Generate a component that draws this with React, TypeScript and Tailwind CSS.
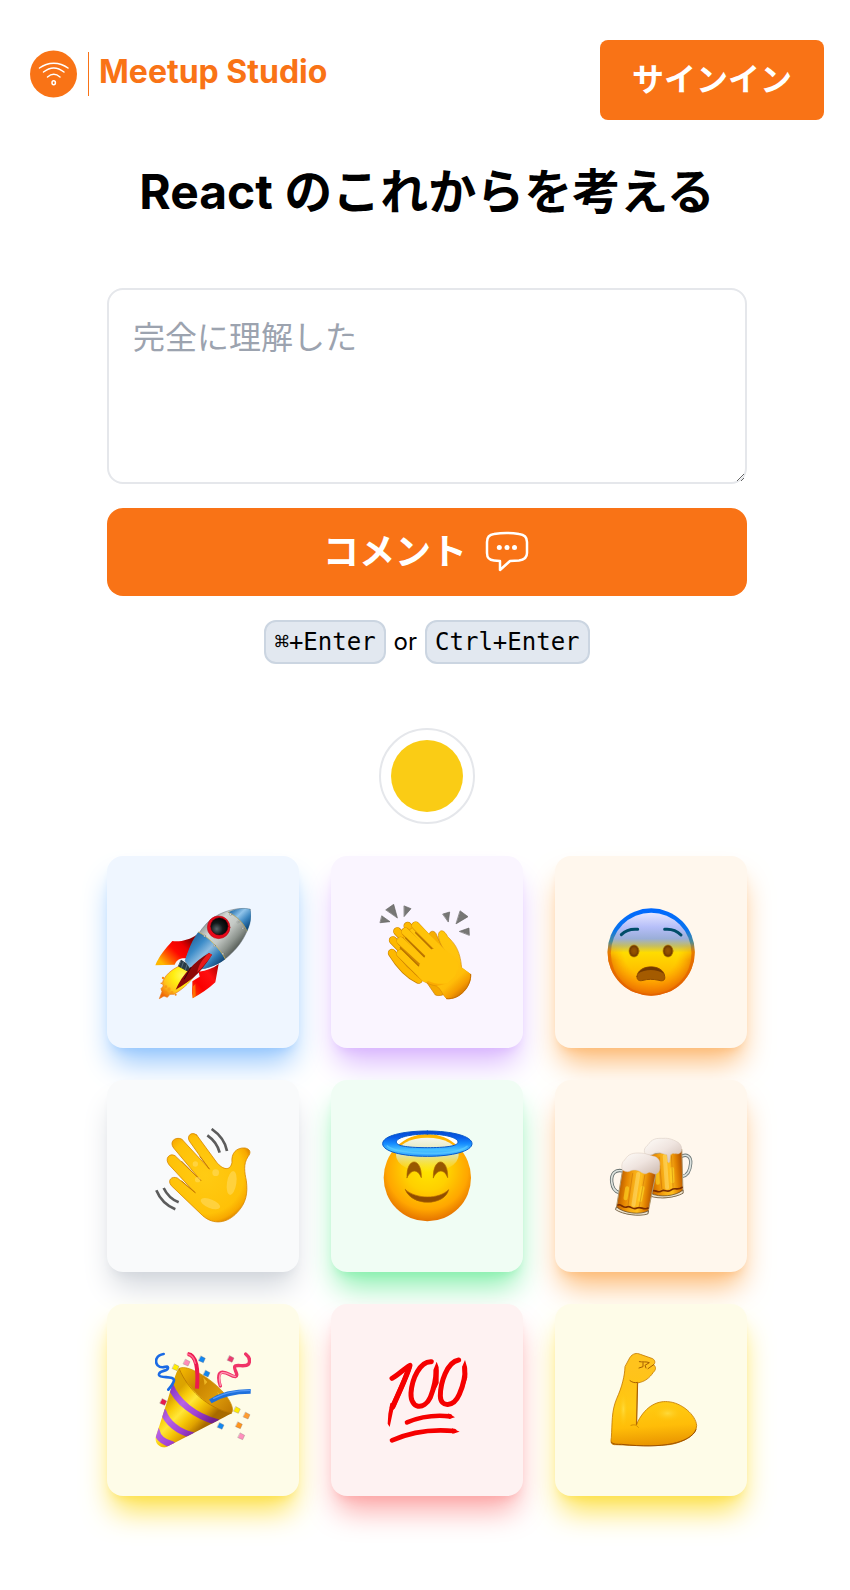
import type { ReactNode } from "react";

function Stops({ colors }: { colors: string[] }) {
  return (
    <>
      {colors.map((c, i) => (
        <stop key={i} offset={i / (colors.length - 1)} stopColor={c} />
      ))}
    </>
  );
}

function Emoji({ box, children }: { box: string; children: ReactNode }) {
  return (
    <svg viewBox={box} className="size-24" aria-hidden="true" strokeLinecap="round" strokeLinejoin="round">
      {children}
    </svg>
  );
}

function Rocket() {
  return (
    <Emoji box="195 192 288 288">
      <defs>
        <linearGradient id="rk-steel" gradientUnits="userSpaceOnUse" x1="345" y1="245" x2="445" y2="335">
          <Stops colors={["#8d9490", "#d3d7d4", "#c4c9c5", "#8b928c", "#3e4540"]} />
        </linearGradient>
        <linearGradient id="rk-blue" gradientUnits="userSpaceOnUse" x1="300" y1="300" x2="385" y2="385">
          <Stops colors={["#2669a0", "#3b8bc8", "#8dbce0", "#2f7bb5", "#0c3a66"]} />
        </linearGradient>
        <linearGradient id="rk-nose" gradientUnits="userSpaceOnUse" x1="435" y1="205" x2="482" y2="255">
          <Stops colors={["#2f78b4", "#90c4ea", "#3b86c0", "#0d4a80"]} />
        </linearGradient>
        <linearGradient id="rk-fin" gradientUnits="userSpaceOnUse" x1="300" y1="300" x2="225" y2="378">
          <Stops colors={["#8e0000", "#ee0000", "#ff0800", "#ff5a00", "#ffb800"]} />
        </linearGradient>
        <linearGradient id="rk-fin2" x1="1" y1="0" x2="0" y2="1">
          <Stops colors={["#a00000", "#ff1010", "#fa0000", "#ff4a00"]} />
        </linearGradient>
        <radialGradient id="rk-flame" cx="0.65" cy="0.3" r="0.8">
          <Stops colors={["#fffa60", "#ffee10", "#ffc21a", "#f06a0a"]} />
        </radialGradient>
        <radialGradient id="rk-glass" cx="0.35" cy="0.65" r="0.7">
          <Stops colors={["#59666a", "#12181a", "#000000"]} />
        </radialGradient>
      </defs>
      <path d="M320 284C300 299 272 306 247 303C226 326 206 350 196 376L254 374C262 355 278 353 293 356Z" fill="url(#rk-fin)" />
      <path d="M270 377C244 389 222 407 217 430L220 438L213 446L216 455L208 476L222 468L232 472L240 463L252 463C282 445 305 422 315 403L292 384Z" fill="url(#rk-flame)" stroke="#ea7410" strokeWidth="2" />
      <g fill="#f58a12">
        <circle cx="219" cy="414" r="3.5" /><circle cx="214" cy="430" r="2.5" /><circle cx="257" cy="464" r="3" />
        <circle cx="227" cy="457" r="5" opacity=".7" /><circle cx="237" cy="447" r="5" opacity=".5" /><circle cx="228" cy="440" r="4" opacity=".6" /><circle cx="246" cy="457" r="4" opacity=".5" />
      </g>
      <path d="M386 372L376 427C355 447 330 463 308 475C304 455 308 438 307 424L329 410L326 395C350 392 369 385 386 372Z" fill="url(#rk-fin2)" />
      <path d="M308 440L316 432L317 469L308 475Z" fill="#ff9a00" opacity=".6" />
      <path d="M274 361L302 379L296 395L266 379Z" fill="#283b46" stroke="#15222a" strokeWidth="2" />
      <path d="M280 367L275 382M291 374L286 390" stroke="#6d8796" strokeWidth="2" />
      <path d="M480 208C443 200 397 213 363 238C325 270 298 325 285 362L304 390C343 389 380 377 410 353C453 318 487 265 480 208Z" fill="url(#rk-steel)" stroke="#687078" strokeWidth="1.5" />
      <path d="M325 276C355 290 390 326 406 357C376 381 338 391 304 390L285 362C296 328 306 300 325 276Z" fill="url(#rk-blue)" />
      <path d="M415 217C438 204 465 203 480 208C486 226 482 252 471 273C459 246 440 229 415 217Z" fill="url(#rk-nose)" stroke="#316b91" strokeWidth="1" />
      <path d="M325 276C355 290 390 326 406 357" fill="none" stroke="#e8bd40" strokeWidth="2" />
      <path d="M415 217C440 229 459 246 471 273" fill="none" stroke="#cfae50" strokeWidth="2" />
      <path d="M357 339L366 344C350 370 336 386 325 399C306 418 281 436 257 449C276 405 315 363 357 339Z" fill="#8e0808" />
      <path d="M357 339L366 344C350 367 335 384 322 397C324 378 338 355 357 339Z" fill="#e91a1a" />
      <path d="M303 382L283 417" stroke="#34070b" strokeWidth="3" />
      <circle cx="386" cy="262" r="34" fill="#e8081a" stroke="#b00914" strokeWidth="1.5" />
      <circle cx="388" cy="259" r="26" fill="url(#rk-glass)" stroke="#430006" strokeWidth="1.5" />
      <g fill="#dcdedb" stroke="#59615c" strokeWidth="1">
        <circle cx="422" cy="223" r="3.5" /><circle cx="444" cy="246" r="3" /><circle cx="459" cy="265" r="3" />
        <circle cx="344" cy="288" r="3" /><circle cx="373" cy="317" r="3" /><circle cx="399" cy="341" r="3" />
      </g>
    </Emoji>
  );
}

function Clap() {
  return (
    <Emoji box="192 192 288 288">
      <defs>
        <linearGradient id="cl-skin" gradientUnits="userSpaceOnUse" x1="400" y1="270" x2="330" y2="440">
          <Stops colors={["#ffc70a", "#ffc40c", "#ffba08", "#f8a500"]} />
        </linearGradient>
        <linearGradient id="cl-wrist" gradientUnits="userSpaceOnUse" x1="390" y1="410" x2="442" y2="470">
          <Stops colors={["#ffc20a", "#ffbd08", "#f59b00", "#c96a00"]} />
        </linearGradient>
      </defs>
      <g fill="#777775" stroke="#646462" strokeWidth="2">
        <path d="M213 209L236 193L247 233Z" /><path d="M268 198L288 206L268 229Z" /><path d="M201 228L225 245L196 248Z" />
        <path d="M384 222L404 216L400 245Z" /><path d="M436 213L459 230L424 251Z" /><path d="M434 274L462 264L463 285Z" />
      </g>
      <path d="M337 430L361 465C371 469 383 466 389 461L376 430Z" fill="#f5a800" stroke="#c77800" strokeWidth="2" />
      <g fill="none">
        <g stroke="#c98200" strokeWidth="25">
          <path d="M278 258L320 300M247 274L295 325M234 301L292 360M231 339C250 370 275 402 311 419" />
        </g>
        <g stroke="#fdb800" strokeWidth="21">
          <path d="M278 258L320 300M247 274L295 325M234 301L292 360M231 339C250 370 275 402 311 419" />
        </g>
      </g>
      <path d="M342 286C343 268 362 271 365 286L386 331L355 324Z" fill="#f6ae00" stroke="#c77b00" strokeWidth="2" />
      <path d="M301 257L369 329L389 332C374 310 365 287 373 276C382 266 392 278 398 290C417 309 435 327 440 384L467 403C470 438 435 480 395 476C381 464 380 447 364 438C338 434 318 420 302 405L250 348L270 281Z" fill="url(#cl-skin)" stroke="#d98d00" strokeWidth="2" />
      <g fill="none" stroke="#d08400" strokeWidth="25">
        <path d="M256 341L312 397" /><path d="M257 303L324 371" /><path d="M271 275L335 344" /><path d="M302 257L360 319" />
      </g>
      <g fill="none" stroke="#ffc309" strokeWidth="22">
        <path d="M256 341L331 415" /><path d="M257 303L350 389" /><path d="M271 275L362 362" /><path d="M302 257L390 345" />
      </g>
      <path d="M348 326L385 329C417 343 438 367 430 401L398 430C360 437 330 420 310 404L311 377L329 350Z" fill="#ffc309" />
      <path d="M425 390L440 382L467 403C470 438 435 480 395 476C385 465 379 446 366 438C395 435 425 415 425 390Z" fill="url(#cl-wrist)" />
      <path d="M350 326L302 278M328 350L272 294M311 377L256 323" fill="none" stroke="#b77300" strokeWidth="4" />
      <path d="M467 403C469 438 435 480 395 476" fill="none" stroke="#c76c00" strokeWidth="3" />
    </Emoji>
  );
}

function FearfulFace() {
  return (
    <Emoji box="189 192 288 288">
      <defs>
        <linearGradient id="fe-face" x1="0" y1="0" x2="0" y2="1">
          <stop offset="0" stopColor="#e5e6ff" /><stop offset=".18" stopColor="#b5bef8" /><stop offset=".32" stopColor="#9aaed8" />
          <stop offset=".41" stopColor="#c5be62" /><stop offset=".49" stopColor="#ffdc00" /><stop offset=".75" stopColor="#ffbb00" /><stop offset="1" stopColor="#ff9600" />
        </linearGradient>
        <linearGradient id="fe-rim" x1="0" y1="0" x2="0" y2="1">
          <stop offset="0" stopColor="#0068ff" /><stop offset=".25" stopColor="#0874ed" /><stop offset=".38" stopColor="#4a8a98" /><stop offset=".5" stopColor="#e78800" /><stop offset="1" stopColor="#e96700" />
        </linearGradient>
        <radialGradient id="fe-edge" gradientUnits="userSpaceOnUse" cx="333.5" cy="330" r="138">
          <stop offset=".6" stopColor="#ff8800" stopOpacity="0" /><stop offset="1" stopColor="#e06000" stopOpacity=".85" />
        </radialGradient>
        <linearGradient id="fe-fade" gradientUnits="userSpaceOnUse" x1="0" y1="310" x2="0" y2="360">
          <stop offset="0" stopColor="#000" /><stop offset="1" stopColor="#fff" />
        </linearGradient>
        <mask id="fe-lower"><path d="M189 192H477V480H189Z" fill="url(#fe-fade)" /></mask>
        <radialGradient id="fe-eye"><Stops colors={["#985700", "#8c4c00", "#613200"]} /></radialGradient>
      </defs>
      <circle cx="333.5" cy="336" r="131" fill="url(#fe-rim)" />
      <ellipse cx="333.5" cy="340" rx="121" ry="122" fill="url(#fe-face)" />
      <circle cx="333.5" cy="336" r="131" fill="url(#fe-edge)" mask="url(#fe-lower)" />
      <g fill="none" stroke="#004d68" strokeWidth="9"><path d="M244 284C256 272 273 266 293 268" /><path d="M374 268C394 266 411 273 423 285" /></g>
      <g fill="url(#fe-eye)" stroke="#b57700" strokeWidth="2"><ellipse cx="282" cy="333" rx="15" ry="18" /><ellipse cx="384" cy="333" rx="15" ry="18" /></g>
      <path d="M291 409C294 371 371 371 374 409C377 423 365 424 357 421C340 417 323 417 309 421C298 424 290 421 291 409Z" fill="#a45b00" stroke="#8f4b00" strokeWidth="3" />
      <path d="M294 401C308 374 358 374 371 401C351 386 314 386 294 401Z" fill="#723900" />
    </Emoji>
  );
}

function Wave() {
  return (
    <Emoji box="195 189 288 288">
      <defs>
        <radialGradient id="wa-skin" gradientUnits="userSpaceOnUse" cx="345" cy="330" r="155">
          <stop offset="0" stopColor="#ffcb13" /><stop offset=".75" stopColor="#ffc107" /><stop offset=".9" stopColor="#f8a900" /><stop offset="1" stopColor="#d97c00" />
        </radialGradient>
      </defs>
      <g fill="none" stroke="#5c5c5c" strokeWidth="8" strokeLinecap="butt">
        <path d="M365 192C388 208 406 230 411 258M352 211C371 224 384 243 389 263M199 376C210 403 229 422 256 433M221 369C231 390 246 404 266 412" />
      </g>
      <path d="M320 210L380 292C399 315 421 319 426 292C423 265 439 247 465 249C481 252 484 263 474 275C459 297 464 323 469 347C474 385 468 415 442 442C412 475 371 481 338 452L244 362C231 346 245 332 262 339L314 382L237 299C223 281 238 263 255 272L331 345L251 249C237 231 254 214 275 222L357 311L300 231C287 214 304 197 320 210Z" fill="url(#wa-skin)" stroke="#d98900" strokeWidth="2.500" />
      <path d="M316 383L275 348M333 347L275 289M358 312L330 275" fill="none" stroke="#c57b00" strokeWidth="3" />
      <g fill="#ffdf70" opacity=".5">
        <ellipse cx="425" cy="354" rx="14" ry="36" transform="rotate(9 425 354)" /><ellipse cx="361" cy="416" rx="31" ry="13" transform="rotate(22 361 416)" />
        <circle cx="316" cy="297" r="8" /><circle cx="323" cy="344" r="8" /><circle cx="377" cy="323" r="10" />
      </g>
    </Emoji>
  );
}

function Halo() {
  return (
    <Emoji box="192 189 288 288">
      <defs>
        <radialGradient id="ha-face" cx=".5" cy=".4" r=".62">
          <stop offset="0" stopColor="#ffe600" /><stop offset=".4" stopColor="#ffd000" /><stop offset=".75" stopColor="#ffa600" /><stop offset="1" stopColor="#e06a00" />
        </radialGradient>
        <linearGradient id="ha-top" x1="0" y1="0" x2="0" y2="1"><stop offset="0" stopColor="#f4f7ee" /><stop offset=".5" stopColor="#dfe3a8" /><stop offset="1" stopColor="#ffe94a" stopOpacity="0" /></linearGradient>
        <linearGradient id="ha-ring" x1="0" y1="0" x2="0" y2="1"><Stops colors={["#0747d0", "#085ce8", "#168cff", "#49c3ff", "#2e9fff"]} /></linearGradient>
      </defs>
      <ellipse cx="337" cy="231" rx="94" ry="24" fill="#ffffff" />
      <circle cx="337" cy="338" r="131" fill="url(#ha-face)" />
      <ellipse cx="337" cy="270" rx="94" ry="52" fill="url(#ha-top)" />
      <path fillRule="evenodd" d="M337 198C413 198 471 214 471 236S413 274 337 274S203 259 203 236S261 198 337 198ZM337 207C285 207 244 218 244 231S285 248 337 248S429 244 429 231S389 207 337 207Z" fill="url(#ha-ring)" stroke="#0758c9" strokeWidth="3" />
      <path d="M217 243C247 270 415 275 456 244" fill="none" stroke="#62cfff" strokeWidth="5" opacity=".6" />
      <g fill="#985700" stroke="#ad6a00" strokeWidth="2"><path d="M276 338C273 275 321 275 319 338C307 310 288 313 276 338Z" /><path d="M355 338C353 275 400 275 398 338C387 310 367 313 355 338Z" /></g>
      <path d="M271 374C303 403 371 404 401 374C389 423 291 426 271 374Z" fill="#914d00" stroke="#ae6200" strokeWidth="2" />
    </Emoji>
  );
}

function Mug() {
  return (
    <>
      <path d="M0 5L101 0L91 129C67 142 18 142 -5 128Z" fill="url(#be-beer)" stroke="#b09a70" strokeWidth="3" />
      <path d="M-4 122C19 137 68 138 92 121L91 131C66 142 17 142 -6 130Z" fill="#f0e5ce" stroke="#57452c" strokeWidth="2" />
      <path d="M-1 115C8 109 16 125 28 117C37 112 45 126 57 117C68 110 77 122 90 113" fill="none" stroke="#7a2d00" strokeWidth="5" />
      <path d="M48 15L45 109" stroke="#fff2a0" strokeWidth="12" opacity=".35" />
      <path d="M20 62L19 92M66 55L63 92" stroke="#ffe02a" strokeWidth="12" opacity=".55" />
      <path d="M31 16L29 111M68 16L63 110" stroke="#a94b00" strokeWidth="2" opacity=".45" />
    </>
  );
}

function Beers() {
  return (
    <Emoji box="189 189 288 288">
      <defs>
        <linearGradient id="be-beer" x1="0" y1="0" x2="1" y2="0"><Stops colors={["#b85a00", "#e68600", "#f7ac16", "#ffbe1d", "#e18200", "#ab4a00"]} /></linearGradient>
        <linearGradient id="be-foam" x1="0" y1="0" x2="1" y2="1"><Stops colors={["#fffdf9", "#efe4df", "#cdbab0"]} /></linearGradient>
      </defs>
      <path d="M420 276C440 264 454 274 452 296C450 320 441 332 427 334" fill="none" stroke="#697575" strokeWidth="10" />
      <path d="M420 276C440 264 454 274 452 296C450 320 441 332 427 334" fill="none" stroke="#dce2df" strokeWidth="5" />
      <g transform="translate(325 264) rotate(-6)"><Mug /></g>
      <path d="M313 260C311 246 325 241 328 234C340 218 359 220 369 220C389 218 403 226 414 232C427 241 427 257 421 263C413 269 408 265 403 266C396 263 397 268 391 269L389 290C387 295 382 292 383 286L381 269C365 266 359 260 346 262C337 273 328 269 319 269Z" fill="url(#be-foam)" stroke="#d5c6bc" strokeWidth="1.500" />
      <path d="M249 318C225 312 213 326 215 350C217 370 225 380 238 383" fill="none" stroke="#606b6a" strokeWidth="10" />
      <path d="M249 318C225 312 213 326 215 350C217 370 225 380 238 383" fill="none" stroke="#dfe4df" strokeWidth="5" />
      <g transform="translate(249 306) rotate(7)"><Mug /></g>
      <path d="M247 315C242 300 248 288 255 284C265 265 282 264 297 264C319 264 325 270 338 273C356 276 362 289 359 304C361 320 351 328 344 327C334 324 331 320 324 323C313 330 306 323 299 319C287 313 276 315 269 319C260 322 254 318 247 315Z" fill="url(#be-foam)" stroke="#d8c8bd" strokeWidth="1.500" />
    </Emoji>
  );
}

function Party() {
  const bits: [number, number, string][] = [
    [336, 208, "#1287f0"], [350, 251, "#1287f0"], [392, 408, "#1287f0"], [422, 207, "#ec3b70"], [220, 336, "#e61c50"],
    [290, 218, "#ff8cb9"], [257, 232, "#ffed00"], [441, 360, "#ffed00"], [470, 377, "#ff9c2f"], [447, 406, "#ff941c"], [454, 439, "#ff8fbd"],
  ];
  return (
    <Emoji box="195 186 288 288">
      <defs>
        <linearGradient id="pa-cone" gradientUnits="userSpaceOnUse" x1="232" y1="335" x2="325" y2="425"><Stops colors={["#dca400", "#f9cc0a", "#ffe638", "#f7c808", "#e0a200", "#a86a00"]} /></linearGradient>
        <linearGradient id="pa-purple" gradientUnits="userSpaceOnUse" x1="235" y1="310" x2="350" y2="410"><Stops colors={["#8a38c5", "#b763e4", "#a040d4", "#71208f"]} /></linearGradient>
        <linearGradient id="pa-mouth" gradientUnits="userSpaceOnUse" x1="280" y1="240" x2="425" y2="365"><Stops colors={["#efb400", "#c98300", "#dd9c0a", "#c07800"]} /></linearGradient>
        <clipPath id="pa-shape"><path d="M266 236C257 244 244 300 196 445C196 462 211 475 228 472L404 381C414 376 420 373 426 369C360 360 300 300 266 236Z" /></clipPath>
      </defs>
      <path d="M268 235C285 224 336 248 380 287C415 318 434 353 426 367C418 376 380 374 340 345C290 309 258 252 268 235Z" fill="url(#pa-mouth)" stroke="#c98c00" strokeWidth="2" />
      <path d="M340 262L352 276L344 285ZM382 305L397 320L388 325Z" fill="#f5c02a" opacity=".8" />
      <g clipPath="url(#pa-shape)">
        <path d="M195 186H483V474H195Z" fill="url(#pa-cone)" />
        <g fill="none" stroke="url(#pa-purple)" strokeWidth="19"><path d="M242 288C260 335 315 378 380 396" /><path d="M220 365C231 397 264 425 306 435" /><path d="M199 420C202 439 218 456 246 463" /></g>
      </g>
      <path d="M268 237C292 296 350 355 425 369" fill="none" stroke="#b87600" strokeWidth="2.500" />
      <path d="M293 192C321 195 325 239 321 296" fill="none" stroke="#ec194f" strokeWidth="12" strokeLinecap="butt" />
      <path d="M292 192C305 194 313 205 316 220" fill="none" stroke="#ff6b91" strokeWidth="4" />
      <path d="M361 334C393 313 435 304 482 304" fill="none" stroke="#1e70dc" strokeWidth="14" strokeLinecap="butt" />
      <path d="M371 325C402 308 441 301 482 301" fill="none" stroke="#5398f7" strokeWidth="4" />
      <path d="M221 192C199 195 193 214 203 226C218 241 233 222 234 233C234 246 205 239 207 255C210 266 247 257 252 269C252 279 243 289 235 299" fill="none" stroke="#1a6ae4" strokeWidth="8" />
      <path d="M391 288C386 274 382 251 394 247C413 244 421 260 436 260C449 256 428 236 435 228C447 223 465 233 476 222C482 210 477 200 467 192" fill="none" stroke="#f03468" strokeWidth="10" />
      <path d="M391 286C387 269 387 252 396 248C414 245 421 259 436 259" fill="none" stroke="#ff9ab5" strokeWidth="4" />
      {bits.map(([x, y, color]) => (
        <path key={`${x}-${y}`} d={`M${x - 3} ${y - 10}L${x + 10} ${y - 3}L${x + 4} ${y + 10}L${x - 10} ${y + 4}Z`} fill={color} stroke="#846f72" strokeWidth="1" />
      ))}
    </Emoji>
  );
}

function Hundred() {
  return (
    <Emoji box="192 186 288 288">
      <g fill="none" stroke="#f50000" strokeLinecap="round">
        <path d="M231 265C252 253 266 237 285 226C276 260 253 304 234 350" strokeWidth="15" />
        <path d="M283 230C270 270 250 310 232 352" strokeWidth="15" />
        <path d="M349 215C315 213 291 266 288 309C286 357 327 362 346 322C357 294 363 268 363 242" strokeWidth="15" />
        <path d="M431 210C396 216 376 278 376 318C377 354 416 352 433 313C447 280 452 257 449 234" strokeWidth="15" />
        <path d="M276 397C314 381 361 374 405 379" strokeWidth="14" />
        <path d="M231 451C285 427 346 416 418 423" strokeWidth="14" />
      </g>
      <g fill="#f50000">
        <path d="M240 335L224 411L218 401L220 371L226 340ZM356 238L365 215L371 232L371 279L361 300ZM442 229L450 210L455 227L457 262L447 292ZM400 370L420 382L402 387ZM411 415L434 425L412 431Z" />
      </g>
    </Emoji>
  );
}

function Muscle() {
  return (
    <Emoji box="864 186 288 288">
      <defs>
        <linearGradient id="mu-skin" gradientUnits="userSpaceOnUse" x1="1000" y1="230" x2="1015" y2="468"><Stops colors={["#ffc31d", "#ffc415", "#ffca12", "#ffbd08", "#e89300"]} /></linearGradient>
        <radialGradient id="mu-light"><stop offset="0" stopColor="#ffdf45" stopOpacity=".8" /><stop offset="1" stopColor="#ffc000" stopOpacity="0" /></radialGradient>
      </defs>
      <path d="M945 202C953 190 965 188 976 193L1013 206C1021 211 1021 220 1016 224C1024 232 1023 239 1015 247C1004 263 991 275 967 279L964 404C988 351 1024 332 1058 335C1099 337 1143 375 1145 407C1144 436 1107 455 1070 463C1025 470 956 466 902 464C889 465 886 458 889 443C892 399 889 364 905 326C921 291 929 258 930 231Z" fill="url(#mu-skin)" stroke="#c47a00" strokeWidth="2.500" />
      <ellipse cx="1058" cy="370" rx="48" ry="27" fill="url(#mu-light)" /><ellipse cx="925" cy="358" rx="15" ry="59" fill="url(#mu-light)" />
      <path d="M945 272C953 278 960 279 968 277L965 403" fill="none" stroke="#a96000" strokeWidth="3" />
      <path d="M973 215C982 217 994 214 1003 218L990 226L993 234M984 218V230L972 234M1016 224L999 236" fill="none" stroke="#a45d00" strokeWidth="3" />
      <path d="M948 406C960 402 965 406 970 412" fill="none" stroke="#d08a00" strokeWidth="3" />
      <path d="M889 457C894 464 907 463 920 463C983 470 1032 469 1072 461C1105 454 1136 440 1143 419" fill="none" stroke="#9d5000" strokeWidth="3" />
    </Emoji>
  );
}

const reactions = [
  { label: "ロケット", card: "bg-blue-50 [--glow:#93c5fd]", art: <Rocket /> },
  { label: "拍手", card: "bg-purple-50 [--glow:#d8b4fe]", art: <Clap /> },
  { label: "青ざめた顔", card: "bg-orange-50 [--glow:#fdba74]", art: <FearfulFace /> },
  { label: "手を振る", card: "bg-gray-50 [--glow:#d1d5db]", art: <Wave /> },
  { label: "天使の笑顔", card: "bg-green-50 [--glow:#86efac]", art: <Halo /> },
  { label: "乾杯", card: "bg-orange-50 [--glow:#fdba74]", art: <Beers /> },
  { label: "クラッカー", card: "bg-yellow-50 [--glow:#fde047]", art: <Party /> },
  { label: "100点", card: "bg-red-50 [--glow:#fca5a5]", art: <Hundred /> },
  { label: "力こぶ", card: "bg-yellow-50 [--glow:#fde047]", art: <Muscle /> },
];

function Logo() {
  return (
    <a href="#" className="flex items-center gap-2.5 pb-3 text-[#f97316]">
      <svg viewBox="0 0 48 48" className="size-12" aria-hidden="true" fill="none" strokeLinecap="round">
        <circle cx="23.500" cy="24" r="23.500" fill="#f97316" />
        <g stroke="#fff" strokeWidth="1.500">
          <path d="M9.500 18C18 11.500 29.500 11.500 38 18" /><path d="M13.500 22C20 16.800 27.500 16.800 34 22" /><path d="M17.500 27C21.500 23.600 26 23.600 30 27" />
          <ellipse cx="23.700" cy="32.700" rx="1.700" ry="2" />
        </g>
      </svg>
      <span className="h-11 w-px bg-[#f97316]" />
      <span className="pb-1 text-[32px] leading-10 font-bold">Meetup Studio</span>
    </a>
  );
}

export default function App() {
  return (
    <div className="min-h-screen bg-white pb-[94px] pl-1 font-['Inter','Noto_Sans_CJK_JP',sans-serif] text-black">
      <header className="flex items-center justify-between px-[26px] pt-10">
        <Logo />
        <button className="rounded-lg bg-[#f97316] px-8 py-5 text-[32px] leading-10 font-bold text-white">サインイン</button>
      </header>
      <main className="flex flex-col items-center">
        <h1 className="mt-12 text-center text-5xl leading-12 font-bold">React のこれからを考える</h1>
        <div className="mt-[72px] flex w-full max-w-[640px] flex-col items-center">
          <form className="flex w-full flex-col gap-6">
            <textarea
              aria-label="コメント"
              placeholder="完全に理解した"
              className="h-[196px] w-full rounded-2xl border-2 border-[#e5e7eb] p-6 text-[32px] leading-12 placeholder:text-[#9ca3af]"
            />
            <button type="button" className="flex h-[88px] items-center justify-center gap-4 rounded-2xl bg-[#f97316] text-4xl font-bold text-white">
              コメント
              <svg viewBox="0 0 48 48" className="size-12" fill="none" stroke="currentColor" strokeWidth="2.500" strokeLinejoin="round" aria-hidden="true">
                <path d="M11 6C19 4.700 28 4.700 36 6C41 6.500 44 9 44 14V25C44 30 41 32 36 32.500L27 33L17 42V33L11 32.500C6 32 4 30 4 25V14C4 9 6 6.500 11 6Z" />
                <g fill="currentColor" stroke="none"><circle cx="16.300" cy="19.500" r="2.500" /><circle cx="24" cy="19.500" r="2.500" /><circle cx="31.500" cy="19.500" r="2.500" /></g>
              </svg>
            </button>
          </form>
          <p className="mt-6 flex items-center gap-2 text-2xl">
            <kbd className="rounded-xl border-2 border-[#cbd5e1] bg-[#e2e8f0] px-2 py-1 font-['DejaVu_Sans_Mono',monospace] leading-8">⌘+Enter</kbd>
            <span>or</span>
            <kbd className="rounded-xl border-2 border-[#cbd5e1] bg-[#e2e8f0] px-2 py-1 font-['DejaVu_Sans_Mono',monospace] leading-8">Ctrl+Enter</kbd>
          </p>
          <button aria-label="色を選択" className="mt-16 size-24 rounded-full border-2 border-[#e5e7eb] p-2.5">
            <span className="block size-full rounded-full bg-[#facc15]" />
          </button>
          <div className="mt-8 grid w-full grid-cols-3 gap-8">
            {reactions.map((r) => (
              <button
                key={r.label}
                aria-label={r.label}
                className={`${r.card} flex aspect-square items-center justify-center rounded-2xl shadow-[0_20px_30px_-6px_var(--glow),0_8px_12px_-8px_var(--glow)]`}
              >
                {r.art}
              </button>
            ))}
          </div>
        </div>
      </main>
    </div>
  );
}
